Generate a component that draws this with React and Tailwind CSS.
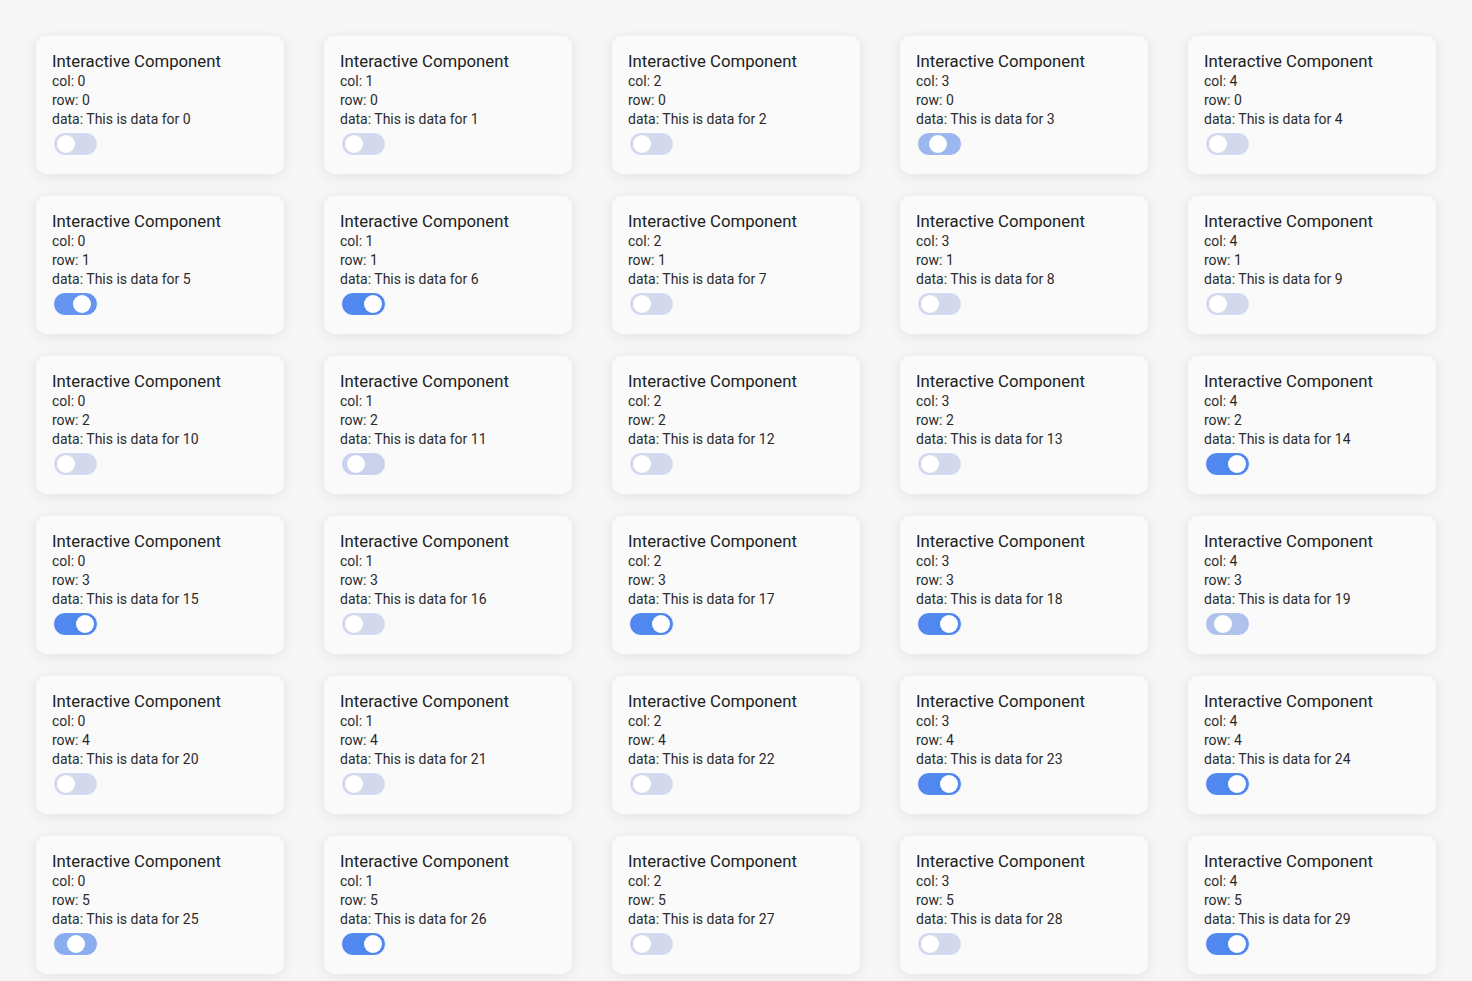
import React from "react";

// toggle progress per card: 0 = off, 1 = on, values between are mid-transition
const STATES = [
  0, 0, 0, 0.42, 0,
  0.85, 1, 0, 0, 0,
  0, 0.08, 0, 0, 1,
  1, 0, 1, 1, 0.28,
  0, 0, 0, 1, 1,
  0.55, 1, 0, 0, 1,
];

const ROWS = 72;
const COLS = 5;

const OFF = [211, 216, 236];
const ON = [80, 136, 240];

function mix(t) {
  const c = OFF.map((o, i) => Math.round(o + (ON[i] - o) * t));
  return `rgb(${c[0]}, ${c[1]}, ${c[2]})`;
}

function stateFor(i) {
  if (i < STATES.length) return STATES[i];
  // deterministic pseudo-random for the rows further down
  return ((i * 7919) % 13) % 3 === 0 ? 1 : 0;
}

function Toggle({ value }) {
  return (
    <div
      className="relative w-[45px] h-[24px] ml-px rounded-full border border-white"
      style={{ backgroundColor: mix(value) }}
    >
      <div
        className="absolute top-[2px] w-[18px] h-[18px] rounded-full bg-white"
        style={{ left: 3 + value * 19 }}
      />
    </div>
  );
}

function Card({ index }) {
  const col = index % COLS;
  const row = Math.floor(index / COLS);
  return (
    <div className="bg-[#fafafa] rounded-[10px] shadow-[0_2px_12px_rgba(0,0,0,0.09)] px-4 pt-[15px] pb-[18px]">
      <div className="text-[16.75px] leading-[21px] text-[#212121]">Interactive Component</div>
      <div className="text-[14px] leading-[19px] text-[#2b2b2b]">
        <div>col: {col}</div>
        <div>row: {row}</div>
        <div>data: This is data for {index}</div>
      </div>
      <div className="mt-[3px]">
        <Toggle value={stateFor(index)} />
      </div>
    </div>
  );
}

export default function App() {
  const items = Array.from({ length: ROWS * COLS }, (_, i) => i);
  return (
    <div className="min-h-screen bg-[#f6f6f6] font-['Roboto',sans-serif] pl-[36px] pt-[36px] pb-[36px]">
      <div className="grid grid-cols-[repeat(5,248px)] gap-x-[40px] gap-y-[22px]">
        {items.map((i) => (
          <Card key={i} index={i} />
        ))}
      </div>
    </div>
  );
}
